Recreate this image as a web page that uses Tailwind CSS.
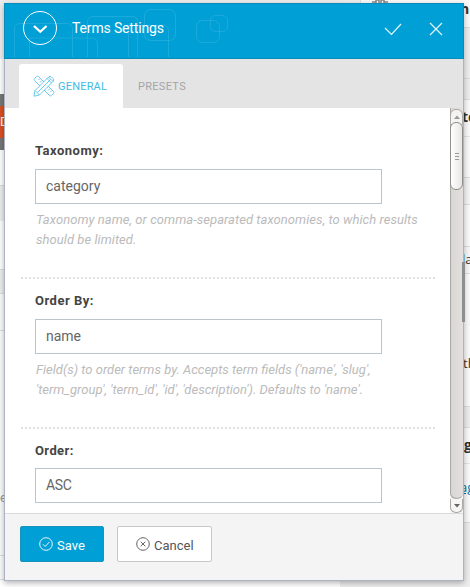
<!DOCTYPE html>
<html lang="en">
<head>
<meta charset="utf-8">
<title>Terms Settings</title>
<script src="https://cdn.jsdelivr.net/npm/@tailwindcss/browser@4"></script>
</head>
<body class="relative h-[587px] w-[470px] overflow-hidden bg-[#eeeeee] font-['Roboto',sans-serif]">
<!-- Page behind the dialog -->
<div class="flex h-full w-full">
  <div class="flex w-[340px] flex-col">
    <div class="h-[59px] bg-[#ededed]"></div>
    <div class="h-[35px] bg-white"></div>
    <div class="h-[12px] bg-[#777777]"></div>
    <div class="h-[32px] overflow-hidden bg-[#dc4f22] pt-[7px] text-[13px] leading-[18px] text-white"><span>D</span></div>
    <div class="h-[12px] bg-[#777777]"></div>
    <div class="h-[36px] border-b border-[#dddddd] bg-white"></div>
    <div class="h-[35px] bg-[#eeeeee]"></div>
    <div class="h-[49px] border-b border-[#dddddd] bg-white"></div>
    <div class="h-[24px] border-b border-[#dddddd] bg-[#eeeeee]"></div>
    <div class="h-[37px] border-b border-[#dddddd] bg-[#fcfcfc]"></div>
    <div class="h-[225px] border-b border-[#dddddd] bg-[#fcfcfc] pt-[158px] text-[13px] leading-[18px] text-[#999999]"><span>e</span></div>
    <div class="h-[24px] border-b border-[#dddddd] bg-[#fcfcfc]"></div>
    <div class="grow bg-white"></div>
  </div>
  <div class="flex w-[130px] flex-col font-['Open_Sans',sans-serif] text-[14px] leading-[18px] text-[#333333]">
    <div class="flex h-[28px] border-b border-[#dddddd]">
      <div class="w-[20px]"></div>
      <div class="relative grow border-l border-[#e0e0e0] bg-[#fafafa] font-bold">
        <svg class="absolute -top-[8px] left-[10px]" width="18" height="12" viewBox="0 0 18 12" fill="none" stroke="#888" stroke-width="1.5"><path d="M1 10h4v2M5 10V8h3v3M10 11V8h3v2h4M13 10v2"/></svg>
        <span class="absolute left-[99px] top-0">n</span>
      </div>
    </div>
    <div class="h-[51px] border-b border-[#dddddd] bg-[#eeeeee]"></div>
    <div class="h-[21px] border-b border-[#dddddd]"></div>
    <div class="h-[37px] overflow-hidden border-b border-[#e5e5e5] bg-[#fafafa] pl-[122px] pt-[8px] font-bold">to</div>
    <div class="h-[41px] border-b border-[#dddddd] bg-[#fafafa]"></div>
    <div class="h-[27px] border-b border-[#dddddd] bg-[#f5f5f5]"></div>
    <div class="h-[42px] border-b border-[#dddddd] bg-[#fafafa]"></div>
    <div class="h-[27px] overflow-hidden border-b border-[#dddddd] bg-[#f7f7f7] pl-[122px] pt-[3px] text-[13px]">la</div>
    <div class="h-[133px] overflow-hidden border-b border-[#dddddd] bg-[#fafafa] pl-[123px] pt-[80px] text-[13px]">th</div>
    <div class="h-[21px] border-b border-[#dddddd]"></div>
    <div class="h-[36px] overflow-hidden border-b border-[#e5e5e5] bg-[#fafafa] pl-[124px] pt-[8px] font-bold">g</div>
    <div class="h-[59px] overflow-hidden border-b border-[#dddddd] bg-[#fafafa] pl-[120px] pt-[14px] text-[13px] text-[#0074a2] underline">ag</div>
  </div>
</div>
<!-- Dialog -->
<div class="absolute left-[4px] top-[3px] flex h-[578px] w-[460px] flex-col border border-[#abb4c2] bg-white shadow-[0_2px_6px_rgba(0,0,0,0.3)]">
  <div class="relative -mx-px -mt-px flex h-[56px] shrink-0 items-center border border-[#078cba] bg-[#00a0d6]">
    <svg class="absolute left-0 top-0" width="240" height="54" viewBox="5 4 240 54" fill="none" stroke="#35b4df" stroke-opacity=".5">
      <path d="M14.500 57V29q0-5.500 5.500-5.500H67q5.500 0 5.500 5.500V57M29.500 57V38h62q6 0 6 6V57M87.500 57V22q0-5.500 5.500-5.500h39q5.500 0 5.500 5.500V57M128.500 57V31q0-5.500 5.500-5.500h29q5.500 0 5.500 5.500V57"/>
      <rect x="144.500" y="9.500" width="31" height="31" rx="6"/><rect x="196.500" y="20.500" width="23" height="22" rx="6"/><rect x="210.500" y="15.500" width="17" height="16" rx="5"/>
    </svg>
    <svg class="relative -mt-[6px] ml-[17px] shrink-0" width="36" height="36" viewBox="0 0 36 36" fill="none" stroke="#fff"><circle cx="18" cy="18" r="16.500" stroke-width="1"/><path d="M12 16l6.300 5.800 6.200-5.800" stroke-width="2.300"/></svg>
    <h1 class="relative -mt-[7px] ml-[14px] w-[140px] whitespace-nowrap text-[14px] leading-[20px] tracking-[-.15px] text-white">Terms Settings</h1>
    <svg class="-mt-[4px] ml-[172px] shrink-0" width="18" height="14" viewBox="0 0 18 14" fill="none" stroke="#fff" stroke-opacity=".9" stroke-width="1.2"><path d="M1 6l6.500 6.500L17 2"/></svg>
    <svg class="-mt-[4px] ml-[27px] shrink-0" width="14" height="14" viewBox="0 0 14 14" fill="none" stroke="#fff" stroke-opacity=".9" stroke-width="1.2"><path d="M1 1l12 12M13 1L1 13"/></svg>
  </div>
  <div class="flex h-[49px] shrink-0 items-end bg-[#e4e4e4] pl-[14px] text-[11px] leading-[16px]">
    <div class="flex h-[44px] w-[104px] items-center rounded-t-[3px] bg-white pl-[14px] text-[#42bbe5]">
      <svg class="mt-[-1px]" width="22" height="22" viewBox="0 0 22 22" fill="none" stroke="#55c2e8" stroke-width=".85">
        <path d="M5.500 1.500l15 15q1 1 0 2l-2 2q-1 1-2 0L1.500 5.500q-1-1 0-2l2-2q1-1 2 0zM7 3.500L5.500 5M9 5.500L7 7.500M15 11.500l-1.500 1.500M17 13.500l-2 2M19 15.500L17.500 17"/>
        <path d="M2 15.500L15.500 2q1.500-1.500 3 0L20 3.500q1.500 1.500 0 3L6.500 20 1 21.200zM2 15.500L6.500 20M14 3.500L18.500 8M15.500 2L20 6.500M4.500 17.500l13-13" fill="#fff"/>
      </svg>
      <span class="ml-[3px] mt-[2px] tracking-[.2px]">GENERAL</span>
    </div>
    <div class="flex h-[44px] items-center pl-[15px] pt-[2px] tracking-[.3px] text-[#a5a5a5]">PRESETS</div>
  </div>
  <div class="flex h-[406px] shrink-0 overflow-hidden border-b border-[#d9dcde] bg-white">
    <div class="w-[445px] pl-[16px] pr-[15px]">
      <section class="h-[171px] border-b-2 border-dotted border-[#e1e1e1] pl-[14px] pt-[34px]">
        <h2 class="text-[13px] font-bold leading-[18px] tracking-[.5px] text-[#444444]">Taxonomy:</h2>
        <div class="mt-[9px] flex h-[35px] w-[347px] items-center border border-[#bac5cc] pl-[10px] text-[14px] text-[#666666]">category</div>
        <p class="mt-[6px] whitespace-nowrap pl-[1px] text-[13px] italic leading-[20px] tracking-[.05px] text-[#bbbbbb]">Taxonomy name, or comma-separated taxonomies, to which results<br>should be limited.</p>
      </section>
      <section class="h-[150px] border-b-2 border-dotted border-[#e1e1e1] pl-[14px] pt-[13px]">
        <h2 class="text-[13px] font-bold leading-[18px] tracking-[.5px] text-[#444444]">Order By:</h2>
        <div class="mt-[9px] flex h-[35px] w-[347px] items-center border border-[#bac5cc] pl-[10px] text-[14px] text-[#666666]">name</div>
        <p class="mt-[6px] whitespace-nowrap pl-[1px] text-[13px] italic leading-[20px] text-[#bbbbbb]">Field(s) to order terms by. Accepts term fields ('name', 'slug',<br>'term_group', 'term_id', 'id', 'description'). Defaults to 'name'.</p>
      </section>
      <section class="pl-[14px] pt-[13px]">
        <h2 class="text-[13px] font-bold leading-[18px] tracking-[.4px] text-[#444444]">Order:</h2>
        <div class="mt-[8px] flex h-[35px] w-[347px] items-center border border-[#bac5cc] pl-[10px] text-[14px] tracking-[-.3px] text-[#666666]">ASC</div>
      </section>
    </div>
    <div class="flex w-[13px] flex-col bg-linear-to-r from-[#d7d5d2] to-[#e3e0de] pt-[1px] shadow-[inset_1px_0_#aaa8a4]">
      <div class="flex h-[16px] items-center justify-center rounded-t-[6px] border border-[#aaa8a4] bg-[#f4f3f2]"><svg width="6" height="4"><path d="M0 4l3-3.500L6 4" fill="#999"/></svg></div>
      <div class="-mt-[3px] flex h-[68px] flex-col items-center justify-center gap-[2px] rounded-[6px] border border-[#908e8b] bg-linear-to-r from-white to-[#e9e6e5]">
        <i class="h-px w-[4px] bg-[#999999]"></i><i class="h-px w-[4px] bg-[#999999]"></i><i class="h-px w-[4px] bg-[#999999]"></i>
      </div>
      <div class="flex h-[323px] flex-col justify-end bg-linear-to-b from-transparent from-[93%] to-[#f7f6f5] to-[93%]">
        <div class="h-[309px] rounded-b-[6px] border-b border-[#aaa8a4] bg-linear-to-r from-[#d7d5d2] to-[#e3e0de] shadow-[inset_1px_0_#aaa8a4]"></div>
        <div class="flex h-[14px] items-center justify-center rounded-b-[6px] border border-t-0 border-[#aaa8a4] bg-[#f7f6f5]"><svg width="6" height="4"><path d="M0 0l3 3.500L6 0" fill="#666"/></svg></div>
      </div>
    </div>
  </div>
  <div class="flex grow items-start gap-[13px] bg-[#f4f4f4] pl-[15px] pt-[12px] text-[13px] text-[#555555]">
    <button class="flex h-[36px] w-[84px] items-center rounded-[2px] border border-[#1794c0] bg-[#00a0d6] pl-[18px] pt-[3px] text-white">
      <svg class="mr-[4px] -mt-[3px] shrink-0" width="14" height="14" viewBox="0 0 14 14" fill="none" stroke="currentColor" stroke-width=".9"><circle cx="7" cy="7" r="6.300"/><path d="M4 7.300l2.200 2.200L10.300 5"/></svg>Save</button>
    <button class="flex h-[36px] w-[95px] items-center rounded-[2px] border border-[#c8c8c8] bg-white pl-[18px] pt-[3px]">
      <svg class="mr-[4px] -mt-[3px] shrink-0" width="14" height="14" viewBox="0 0 14 14" fill="none" stroke="currentColor" stroke-width=".9"><circle cx="7" cy="7" r="6.300"/><path d="M4.700 4.700l4.600 4.600M9.300 4.700L4.700 9.300"/></svg>Cancel</button>
  </div>
</div>
<!-- Page scroll thumb over the dialog edge -->
<div class="absolute left-[462px] top-[262px] h-[60px] w-[3px] bg-[#8d8f8f]"></div>
</body>
</html>
